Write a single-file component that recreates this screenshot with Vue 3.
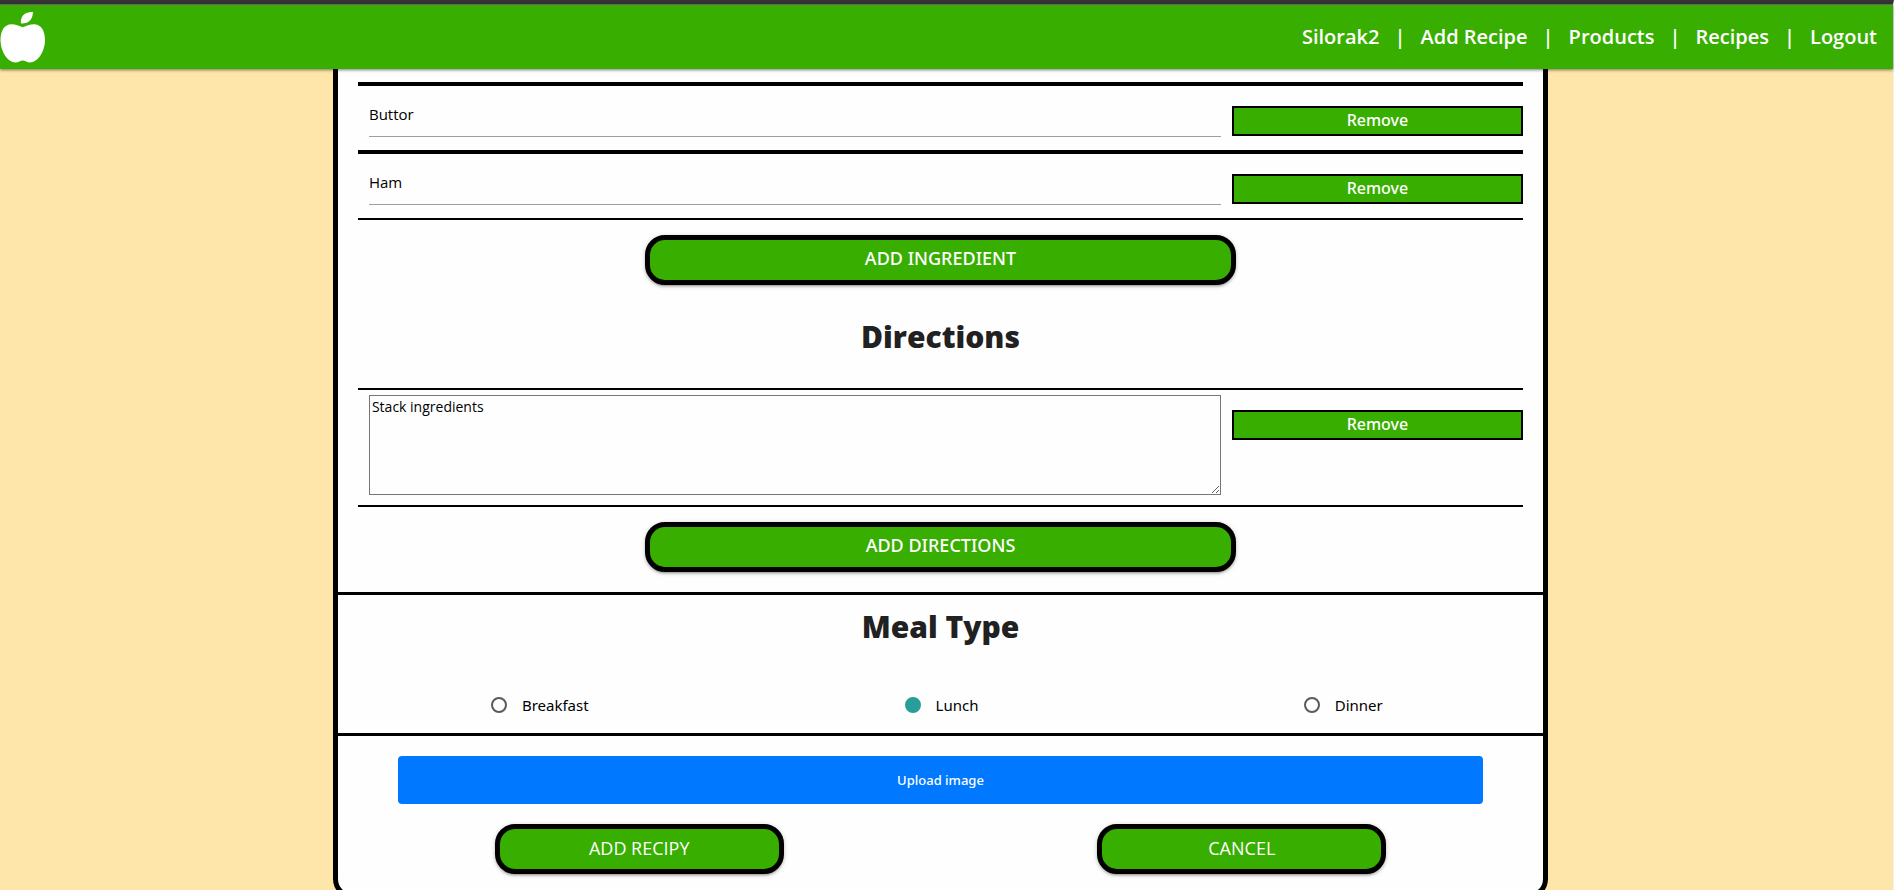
<script setup>
import { ref } from 'vue'

const navLinks = ['Silorak2', 'Add Recipe', 'Products', 'Recipes', 'Logout']
const ingredients = ref(['Buttor', 'Ham'])
const directions = ref(['Stack ingredients'])
const mealTypes = ['Breakfast', 'Lunch', 'Dinner']
const mealType = ref('Lunch')
</script>

<template>
  <div class="page">
    <header class="navbar">
      <a href="#" class="logo" aria-label="Home">
        <svg viewBox="0 0 45 51" width="45" height="51" fill="#fff" aria-hidden="true">
          <path d="M21 11.5C20.500 7 22 3 26 1.200C28 0.300 30.500 0 33 0C32.800 3 32.300 5.500 30.500 8C28.300 10.800 24.500 11.800 21 11.500Z" />
          <path d="M22.700 15.200C26 14 30 12.200 34 12.200C41 12.200 45 18.500 45 28C45 39 38 50.500 30 50.500C27 50.500 25 48.500 22.700 48.500C20.400 48.500 18.500 50.500 15.500 50.500C7.500 50.500 0.500 39 0.500 28C0.500 18.500 4.500 12.200 11.500 12.200C15.500 12.200 19.500 14 22.700 15.200Z" />
        </svg>
      </a>
      <nav class="links">
        <template v-for="(link, i) in navLinks" :key="link">
          <span v-if="i" class="divider">|</span>
          <a href="#">{{ link }}</a>
        </template>
      </nav>
    </header>

    <div class="content">
      <main class="card">
        <section class="block">
          <div v-for="(item, i) in ingredients" :key="i" class="row ingredient">
            <div class="field">
              <input v-model="ingredients[i]" type="text" :aria-label="`Ingredient ${i + 1}`" />
            </div>
            <button type="button" class="remove">Remove</button>
          </div>
          <div class="action-row">
            <button type="button" class="pill wide">ADD INGREDIENT</button>
          </div>
        </section>

        <section class="block">
          <h2 class="directions-title">Directions</h2>
          <div v-for="(item, i) in directions" :key="i" class="row direction">
            <div class="field">
              <textarea v-model="directions[i]" :aria-label="`Direction ${i + 1}`"></textarea>
            </div>
            <button type="button" class="remove">Remove</button>
          </div>
          <div class="action-row">
            <button type="button" class="pill wide">ADD DIRECTIONS</button>
          </div>
        </section>

        <section class="meal">
          <h2>Meal Type</h2>
          <div class="options">
            <label v-for="type in mealTypes" :key="type">
              <input v-model="mealType" type="radio" name="meal" :value="type" />
              <span>{{ type }}</span>
            </label>
          </div>
        </section>

        <section class="footer">
          <button type="button" class="upload">Upload image</button>
          <div class="submit-row">
            <button type="submit" class="pill">ADD RECIPY</button>
            <button type="button" class="pill">CANCEL</button>
          </div>
        </section>
      </main>
    </div>
  </div>
</template>

<style>
body {
  background: #fee6aa;
  overflow: hidden;
}
</style>

<style scoped>
* {
  box-sizing: border-box;
}

.page {
  min-height: 100vh;
  border-top: 4px solid #363434;
  border-right: 1px solid #efefef;
  font-family: "Open Sans", "Noto Sans", sans-serif;
  color: #000;
}

.navbar {
  position: relative;
  display: flex;
  align-items: center;
  justify-content: space-between;
  height: 65px;
  padding-right: 16px;
  background: #38ae00;
  box-shadow: inset 0 1px #666, 0 1px 3px rgba(0, 0, 0, 0.5);
}

.logo {
  display: flex;
  padding-top: 2px;
}

.links {
  display: flex;
  gap: 15px;
  font-size: 20px;
  font-weight: 600;
  line-height: 28px;
  color: #fff;
}

.links a {
  color: inherit;
  text-decoration: none;
}

.content {
  padding-right: 12px;
}

.card {
  width: 64.6%;
  margin: 0 auto;
  background: #fefefe;
  border: 5px solid #000;
  border-top: 0;
  border-radius: 0 0 20px 20px;
}

.block {
  padding: 0 20px;
}

.block:first-child {
  padding-top: 13px;
}

.row {
  display: grid;
  grid-template-columns: 3fr 1fr;
  align-items: start;
}

.ingredient {
  height: 68px;
  border-top: 4px solid #000;
}

.field {
  display: flex;
  padding: 0 11px;
}

.field input {
  width: 100%;
  height: 51px;
  padding: 6px 0 0;
  border: 0;
  border-bottom: 1px solid #9e9e9e;
  background: transparent;
  font: 15px/20px "Open Sans", "Noto Sans", sans-serif;
  color: #000;
}

.remove {
  height: 30px;
  margin-top: 20px;
  padding: 0 0 2px;
  border: 2px solid #000;
  background: #38ae00;
  font: 500 16px/20px "Noto Sans", "Open Sans", sans-serif;
  color: #fff;
}

.action-row {
  display: flex;
  justify-content: center;
  padding: 15px 0 20px;
  border-top: 2px solid #000;
}

.pill {
  width: 48%;
  height: 50px;
  padding: 0 0 2px;
  border: 5px solid #000;
  border-radius: 20px;
  background: #38ae00;
  box-shadow: 0 2px 2px rgba(0, 0, 0, 0.14), 0 3px 1px -2px rgba(0, 0, 0, 0.12), 0 1px 5px rgba(0, 0, 0, 0.2);
  font: 18px/28px "Open Sans", "Noto Sans", sans-serif;
  color: #fff;
}

.pill.wide {
  width: 50.7%;
  padding-bottom: 4px;
  font: 500 18px/28px "Noto Sans", "Open Sans", sans-serif;
}

h2 {
  margin: 0;
  font-size: 30px;
  font-weight: 800;
  line-height: 40px;
  text-align: center;
  color: #212121;
}

.directions-title {
  padding: 12px 0 31px;
}

.direction {
  height: 117px;
  border-top: 2px solid #000;
}

.direction .field {
  padding-top: 5px;
}

.field textarea {
  width: 100%;
  height: 100px;
  padding: 2px;
  border: 1px solid #767676;
  background: transparent;
  font: 14px/18px "Open Sans", "Noto Sans", sans-serif;
  color: #000;
  resize: both;
}

.meal {
  padding-top: 12px;
  border-top: 3px solid #000;
}

.options {
  display: grid;
  grid-template-columns: repeat(3, 1fr);
  padding: 48px 0 18px;
}

.options label {
  display: flex;
  align-items: center;
  justify-content: center;
  gap: 15px;
  padding-left: 2px;
  font: 15px/20px "Noto Sans", "Open Sans", sans-serif;
}

.options input {
  appearance: none;
  width: 16px;
  height: 16px;
  margin: 0;
  border: 2px solid #5a5a5a;
  border-radius: 50%;
}

.options input:checked {
  border-color: #289e98;
  background: #289e98;
}

.footer {
  padding: 20px 0;
  border-top: 3px solid #000;
}

.upload {
  display: block;
  width: 90%;
  height: 48px;
  margin: 0 auto;
  border: 0;
  border-radius: 4px;
  background: #0078ff;
  font: 500 13px/20px "Noto Sans", "Open Sans", sans-serif;
  color: #fff;
}

.submit-row {
  display: grid;
  grid-template-columns: 1fr 1fr;
  justify-items: center;
  padding-top: 20px;
}
</style>
